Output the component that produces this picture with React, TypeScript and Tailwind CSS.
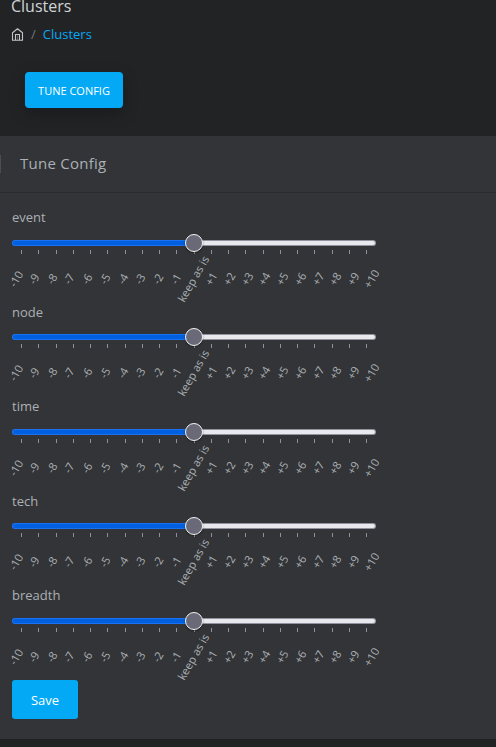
const fields = ['event', 'node', 'time', 'tech', 'breadth'];
const steps = Array.from({ length: 21 }, (_, i) => i - 10);

function stepLabel(n: number) {
  if (n === 0) return 'keep as is';
  return n > 0 ? `+${n}` : `${n}`;
}

function HomeIcon() {
  return (
    <svg width="13" height="13" viewBox="0 0 13 13" fill="none" stroke="#c3c6c9" strokeWidth="1.1" className="shrink-0">
      <path d="M1.5 12.2V4.8L6.5.8l5 4v7.4z" strokeLinejoin="round" />
      <path d="M4.5 12V6.5h4V12" />
      <path d="M6.5 7.5V12" strokeOpacity=".35" />
    </svg>
  );
}

function SliderField({ name }: { name: string }) {
  return (
    <div className="h-[94.5px] w-[364px]">
      <div className="h-[35px] pt-[0.3px] text-[13px] leading-[24px]">{name}</div>
      <div className="flex h-[6px] items-center">
        <div className="h-[6px] w-[182px] rounded-l-[3px] border border-r-0 border-[#1a72f3] bg-[#0060df]" />
        <div className="z-10 -mx-[9px] size-[18px] shrink-0 rounded-full border border-[#f4f4f6] bg-[#696977] shadow-[0_1px_2px_rgba(0,0,0,0.4)]" />
        <div className="h-[6px] w-[182px] rounded-r-[3px] border border-l-0 border-[#92919f] bg-[#e9e9ed]" />
      </div>
      <div className="mt-[4px] ml-[9px] flex w-[346px] justify-between">
        {steps.map((n) => (
          <span key={n} className="h-[4px] w-px bg-[#8f8f9d]" />
        ))}
      </div>
      <div className="mt-[17px] ml-[4.2px] flex w-[355px] justify-between">
        {steps.map((n) => (
          <span key={n} className="flex h-[16px] w-0 justify-center">
            <span className="h-[16px] shrink-0 -rotate-60 text-[11.2px] leading-[16px] whitespace-nowrap">{stepLabel(n)}</span>
          </span>
        ))}
      </div>
    </div>
  );
}

export default function App() {
  return (
    <div className="h-[747px] w-full overflow-hidden bg-[#212224] font-['Open_Sans',sans-serif] text-[#aab0b5]">
      <header className="h-[136px] bg-[#222325]">
        <h1 className="h-[22px] pl-[11px] text-[16px] leading-[12px] text-[#d0d3d6]">Clusters</h1>
        <nav className="flex h-[24px] items-center pl-[11px] text-[13px]">
          <HomeIcon />
          <span className="ml-[7px] pt-[2px] text-[#70757a]">/</span>
          <a className="ml-[7px] pt-[2px] text-[#04a9f5]">Clusters</a>
        </nav>
        <button className="mt-[26px] ml-[25px] block h-[36px] w-[98px] rounded-[4px] bg-[#04a9f5] pt-[2px] text-[11px] text-white shadow-[0_5px_15px_rgba(0,0,0,0.25)]">
          TUNE CONFIG
        </button>
      </header>
      <section className="h-[603px] bg-[#333437]">
        <div className="flex h-[57px] items-center border-b border-[#2a2b2e]">
          <span className="h-[18px] w-px bg-[#4b4d51]" />
          <h2 className="ml-[19px] pb-[2px] text-[15px] tracking-[0.25px]">Tune Config</h2>
        </div>
        <form className="pt-[11.9px] pl-[12px]">
          {fields.map((f) => (
            <SliderField key={f} name={f} />
          ))}
          <button type="button" className="mt-[2.6px] block h-[39px] w-[66px] rounded-[3px] bg-[#04a9f5] pt-[2px] text-[13px] text-white">
            Save
          </button>
        </form>
      </section>
    </div>
  );
}
